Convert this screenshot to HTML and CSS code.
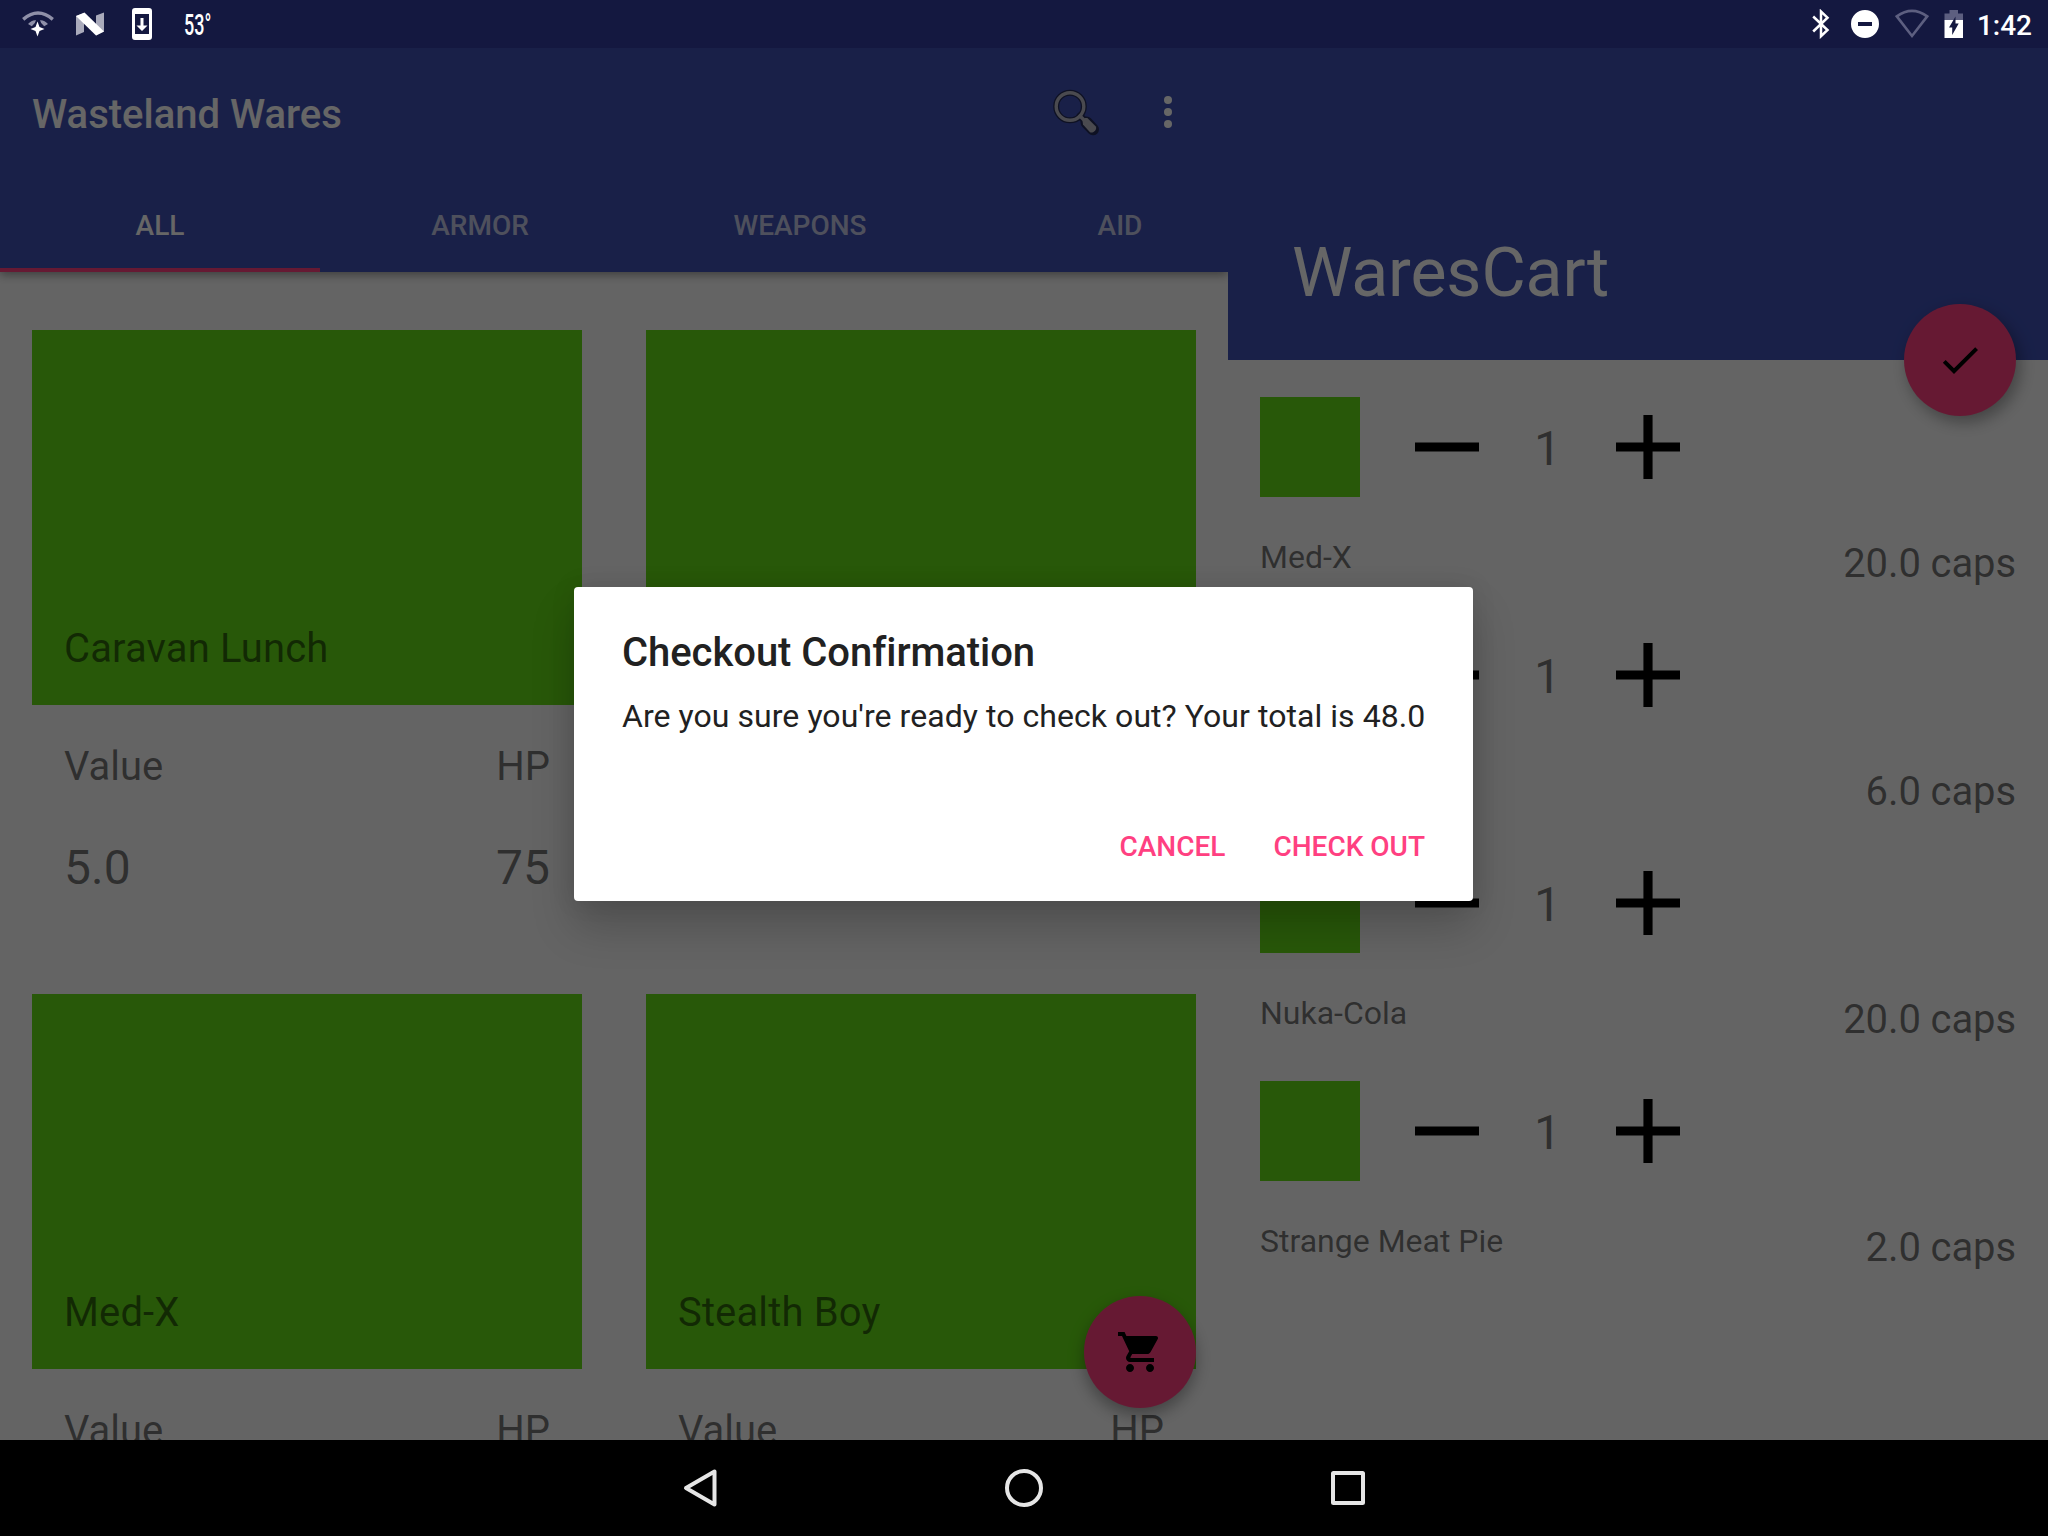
FILE: index.html
```html
<!DOCTYPE html>
<html lang="en">
<head>
<meta charset="utf-8">
<title>Wasteland Wares</title>
<link rel="stylesheet" href="styles.css">
</head>
<body>
<div class="screen">
  <main class="panes">
    <section class="store">
      <header class="appbar">
        <div class="toolbar">
          <h1 class="toolbar-title">Wasteland Wares</h1>
          <svg class="search-icon" viewBox="0 0 48 48">
            <g fill="none" stroke="#252c58" stroke-linecap="round">
              <circle cx="18" cy="18.5" r="13.8" stroke-width="6"/>
              <path d="M28 28l4 4" stroke-width="7"/>
              <path d="M34.500 34.500l6.500 6.800" stroke-width="12"/>
            </g>
            <g fill="none" stroke="#b9b9c6" stroke-linecap="round">
              <circle cx="18" cy="18.500" r="13.800" stroke-width="3.400"/>
              <path d="M28 28l4 4" stroke-width="3.500"/>
            </g>
            <path d="M30.600 33.500l0.500-2 2-1.600h2.200l8.500 8.500c1.700 2.600-2.600 7.400-5.800 5.800l-7-7.600z" fill="#b9b9c6"/>
          </svg>
          <svg class="more-icon" viewBox="0 0 8 32"><circle cx="4" cy="4" r="4"/><circle cx="4" cy="16" r="4"/><circle cx="4" cy="28" r="4"/></svg>
        </div>
        <nav class="tabs">
          <span class="tab tab-active">ALL</span>
          <span class="tab">ARMOR</span>
          <span class="tab">WEAPONS</span>
          <span class="tab">AID</span>
        </nav>
      </header>
      <div class="wares">
        <article class="ware">
          <div class="ware-image">Caravan Lunch</div>
          <div class="labels"><span>Value</span><span>HP</span></div>
          <div class="values"><span>5.0</span><span>75</span></div>
        </article>
        <article class="ware">
          <div class="ware-image"></div>
        </article>
        <article class="ware">
          <div class="ware-image">Med-X</div>
          <div class="labels"><span>Value</span><span>HP</span></div>
        </article>
        <article class="ware">
          <div class="ware-image">Stealth Boy</div>
          <div class="labels"><span>Value</span><span>HP</span></div>
        </article>
      </div>
      <div class="fab fab-cart">
        <svg viewBox="0 0 24 24"><path d="M7 18c-1.100 0-1.990.9-1.990 2S5.900 22 7 22s2-.9 2-2-.9-2-2-2zM1 2v2h2l3.600 7.590-1.350 2.450c-.16.28-.25.61-.25.96 0 1.100.9 2 2 2h12v-2H7.420c-.14 0-.25-.11-.25-.25l.03-.12.9-1.630h7.450c.75 0 1.410-.41 1.750-1.030l3.580-6.490c.08-.14.12-.31.12-.48 0-.55-.45-1-1-1H5.210l-.94-2H1zm16 16c-1.100 0-1.990.9-1.990 2s.89 2 1.990 2 2-.9 2-2-.9-2-2-2z"/></svg>
      </div>
    </section>
    <section class="cart">
      <header class="cart-header">
        <h2 class="cart-title">WaresCart</h2>
        <div class="fab fab-check">
          <svg viewBox="0 0 24 24"><path d="M9 16.170L4.830 12l-1.420 1.410L9 19 21 7l-1.410-1.410z"/></svg>
        </div>
      </header>
      <div class="cart-list">
        <div class="cart-row">
          <div class="controls">
            <div class="thumb"></div>
            <svg class="step" viewBox="5 5 14 14"><path d="M19 13H5v-2h14z"/></svg>
            <span class="count">1</span>
            <svg class="step" viewBox="5 5 14 14"><path d="M19 13h-6v6h-2v-6H5v-2h6V5h2v6h6z"/></svg>
          </div>
          <div class="details"><span class="name">Med-X</span><span class="price">20.0 caps</span></div>
        </div>
        <div class="cart-row">
          <div class="controls">
            <div class="thumb"></div>
            <svg class="step" viewBox="5 5 14 14"><path d="M19 13H5v-2h14z"/></svg>
            <span class="count">1</span>
            <svg class="step" viewBox="5 5 14 14"><path d="M19 13h-6v6h-2v-6H5v-2h6V5h2v6h6z"/></svg>
          </div>
          <div class="details"><span class="name"></span><span class="price">6.0 caps</span></div>
        </div>
        <div class="cart-row">
          <div class="controls">
            <div class="thumb"></div>
            <svg class="step" viewBox="5 5 14 14"><path d="M19 13H5v-2h14z"/></svg>
            <span class="count">1</span>
            <svg class="step" viewBox="5 5 14 14"><path d="M19 13h-6v6h-2v-6H5v-2h6V5h2v6h6z"/></svg>
          </div>
          <div class="details"><span class="name">Nuka-Cola</span><span class="price">20.0 caps</span></div>
        </div>
        <div class="cart-row">
          <div class="controls">
            <div class="thumb"></div>
            <svg class="step" viewBox="5 5 14 14"><path d="M19 13H5v-2h14z"/></svg>
            <span class="count">1</span>
            <svg class="step" viewBox="5 5 14 14"><path d="M19 13h-6v6h-2v-6H5v-2h6V5h2v6h6z"/></svg>
          </div>
          <div class="details"><span class="name">Strange Meat Pie</span><span class="price">2.0 caps</span></div>
        </div>
      </div>
    </section>
  </main>
  <nav class="navbar">
    <svg viewBox="0 0 48 48"><path d="M38.500 7.500v33L10 24z"/></svg>
    <svg viewBox="0 0 48 48"><circle cx="24" cy="24" r="17"/></svg>
    <svg viewBox="0 0 48 48"><rect x="9" y="9" width="30" height="30" rx="0.500"/></svg>
  </nav>

  <div class="scrim">
    <div class="dialog">
      <h3 class="dialog-title">Checkout Confirmation</h3>
      <p class="dialog-text">Are you sure you're ready to check out? Your total is 48.0</p>
      <div class="dialog-actions"><span>CANCEL</span><span>CHECK OUT</span></div>
    </div>
  </div>

  <div class="statusbar">
    <div class="status-left">
      <svg class="st-wifi" viewBox="0 0 32 26">
        <g fill="none" stroke="#8f90a8" stroke-width="3.400">
          <path d="M1.200 8.400Q16-4.200 30.800 8.400"/>
        </g>
        <path d="M6 13Q9.500 8.800 14 9.200Q13.500 12.500 9.800 15.200Z M26 13Q22.500 8.800 18 9.200Q18.500 12.500 22.200 15.200Z" fill="#8f90a8"/>
        <path d="M15.500 10.500l2 5.500 5 2-5 2-2 5.500-2-5.500-5-2 5-2z" fill="#fff"/>
      </svg>
      <svg class="st-n" viewBox="0 0 28 24">
        <path d="M0 4l8-3v19l-8 3.500zM20 3.500l8-3v19l-8 4z" fill="#a9aabb"/>
        <path d="M0 4L8.500.5 28 19.500 20 23.500z" fill="#fff"/>
      </svg>
      <svg class="st-phone" viewBox="0 0 20 32">
        <path fill="#fff" fill-rule="evenodd" d="M3 0h14a3 3 0 0 1 3 3v26a3 3 0 0 1-3 3H3a3 3 0 0 1-3-3V3a3 3 0 0 1 3-3zM3 6v20h14V6zM8.500 10h3v7.500h4L10 23l-5.500-5.500h4z"/>
      </svg>
      <span class="temp">53°</span>
    </div>
    <div class="status-right">
      <svg class="st-bt" viewBox="0 0 18 30">
        <path d="M1.200 7.500L15.500 21 9 27.200V2.500L15.500 8.700 1.200 22.500" fill="none" stroke="#fff" stroke-width="2.500"/>
      </svg>
      <svg class="st-dnd" viewBox="0 0 28 28"><path fill="#fff" fill-rule="evenodd" d="M14 0a14 14 0 1 0 0 28 14 14 0 0 0 0-28zM7 12h14v4H7z"/></svg>
      <svg class="st-signal" viewBox="0 0 34 30"><path d="M1.800 7.400Q17-3.600 32.200 7.400L17 27z" fill="none" stroke="#5d5f80" stroke-width="2.600"/></svg>
      <svg class="st-battery" viewBox="0 0 20 30">
        <path d="M0.500 11V4.500h5V1h8.500v3.500h5V11z" fill="#5d5f80"/>
        <path d="M.5 11h18.500v18H.5z" fill="#fff"/>
        <path d="M11.500 7.500v7h3.200l-6.500 11.500v-7.500H5z" fill="#141840"/>
      </svg>
      <span class="clock">1:42</span>
    </div>
  </div>
</div>
</body>
</html>
```
FILE: styles.css
```css
* { box-sizing: border-box; }

body {
  margin: 0;
  font-family: Roboto, "Liberation Sans", sans-serif;
  color: rgba(0, 0, 0, 0.54);
}

h1, h2, h3, p { margin: 0; font-weight: 400; }

svg { display: block; flex: none; }

.screen {
  position: relative;
  width: 2048px;
  height: 1536px;
  overflow: hidden;
  display: flex;
  flex-direction: column;
  background: #fafafa;
}

.panes {
  height: 1440px;
  display: flex;
  overflow: hidden;
}

/* Store pane */
.store {
  position: relative;
  width: 1228px;
  flex: none;
  overflow: hidden;
}

.appbar {
  position: relative;
  height: 272px;
  padding-top: 48px;
  background: #3f51b5;
  box-shadow: 0 3px 9px rgba(0, 0, 0, 0.38);
}

.toolbar {
  height: 128px;
  padding: 0 56px 0 32px;
  display: flex;
  align-items: center;
}

.toolbar-title {
  flex: 1;
  padding-top: 5px;
  font-size: 40px;
  line-height: 48px;
  font-weight: 500;
  color: #fff;
}

.search-icon { width: 48px; height: 48px; margin-right: 64px; }
.more-icon { width: 8px; height: 32px; fill: #fff; }

.tabs {
  height: 96px;
  display: grid;
  grid-template-columns: repeat(4, 320px);
}

.tab {
  padding-top: 33px;
  text-align: center;
  font-size: 28px;
  line-height: 34px;
  font-weight: 500;
  color: rgba(255, 255, 255, 0.7);
}

.tab-active { color: #fff; border-bottom: 4px solid #ff4081; }

.wares {
  display: grid;
  grid-template-columns: 614px 614px;
  grid-auto-rows: 664px;
  padding-top: 58px;
}

.ware { padding: 0 32px; }

.ware-image {
  height: 375px;
  padding: 0 32px 32px;
  display: flex;
  align-items: flex-end;
  background: #64dd17;
  font-size: 40px;
  line-height: 48px;
  letter-spacing: 0.14px;
}

.labels, .values {
  display: flex;
  justify-content: space-between;
  padding: 0 32px;
}

.labels { margin-top: 38px; font-size: 40px; line-height: 48px; }
.values { margin-top: 49px; font-size: 48px; line-height: 56px; }

/* Floating action buttons */
.fab {
  position: absolute;
  right: 32px;
  width: 112px;
  height: 112px;
  border-radius: 50%;
  display: flex;
  align-items: center;
  justify-content: center;
  background: #ff4081;
  box-shadow: 0 7px 16px rgba(0, 0, 0, 0.34);
}

.fab svg { width: 48px; height: 48px; fill: #000; }
.fab-cart { bottom: 32px; }
.fab-check { bottom: -56px; box-shadow: 4px 6px 16px rgba(0, 0, 0, 0.34); }

/* Cart pane */
.cart { flex: 1; background: #fafafa; position: relative; }

.cart-header {
  position: relative;
  height: 360px;
  padding: 233px 64px 0;
  background: #3f51b5;
}

.cart-title { font-size: 68px; line-height: 80px; letter-spacing: -0.08px; color: #fff; }

.cart-list { padding: 37px 32px 0; }
.cart-row { height: 228px; }

.controls { height: 100px; display: flex; align-items: center; }
.thumb { width: 100px; height: 100px; margin-right: 55px; background: #64dd17; }
.step { width: 64px; height: 64px; fill: #000; }

.count {
  width: 137px;
  padding-top: 3px;
  text-align: center;
  font-size: 48px;
  line-height: 56px;
}

.details {
  display: flex;
  justify-content: space-between;
  padding-top: 41px;
}

.name { font-size: 32px; line-height: 38px; }
.price { padding-top: 2px; font-size: 40px; line-height: 48px; letter-spacing: -0.1px; }

/* System navigation bar */
.navbar {
  height: 96px;
  display: flex;
  align-items: center;
  justify-content: center;
  gap: 276px;
  background: #000;
}

.navbar svg {
  width: 48px;
  height: 48px;
  fill: none;
  stroke: #e6e6e6;
  stroke-width: 4;
  stroke-linejoin: round;
}

/* Modal dialog */
.scrim {
  position: absolute;
  inset: 0 0 96px;
  padding: 587px 575px 0 574px;
  background: rgba(0, 0, 0, 0.6);
}

.dialog {
  height: 314px;
  padding: 42px 48px 0;
  border-radius: 4px;
  background: #fff;
  color: #212121;
  box-shadow: 0 26px 44px rgba(0, 0, 0, 0.2), 0 0 24px rgba(0, 0, 0, 0.1);
}

.dialog-title { font-size: 40px; line-height: 48px; letter-spacing: -0.05px; font-weight: 500; }
.dialog-text { margin-top: 20px; font-size: 32px; line-height: 38px; letter-spacing: 0.055px; white-space: nowrap; }

.dialog-actions {
  margin-top: 95px;
  display: flex;
  justify-content: flex-end;
  gap: 48px;
  font-size: 28px;
  line-height: 34px;
  font-weight: 500;
  color: #ff4081;
}

/* System status bar */
.statusbar {
  position: absolute;
  inset: 0 0 auto;
  height: 48px;
  padding: 0 16px 0 22px;
  display: flex;
  justify-content: space-between;
  background: #141840;
  color: #fff;
}

.status-left, .status-right { display: flex; align-items: center; }

.st-wifi { width: 32px; height: 26px; margin-right: 22px; }
.st-n { width: 28px; height: 24px; margin-right: 28px; }
.st-phone { width: 20px; height: 32px; margin-right: 32px; }

.temp {
  padding-top: 1px;
  font-size: 29px;
  line-height: 34px;
  font-weight: 500;
  transform: scaleX(0.62);
  transform-origin: left;
}

.st-bt { width: 18px; height: 30px; margin-right: 21px; }
.st-dnd { width: 28px; height: 28px; margin-right: 16px; }
.st-signal { width: 34px; height: 30px; margin-right: 15px; }
.st-battery { width: 20px; height: 30px; margin-right: 13px; }
.clock { padding-top: 3px; font-size: 28px; line-height: 34px; font-weight: 500; }
```
